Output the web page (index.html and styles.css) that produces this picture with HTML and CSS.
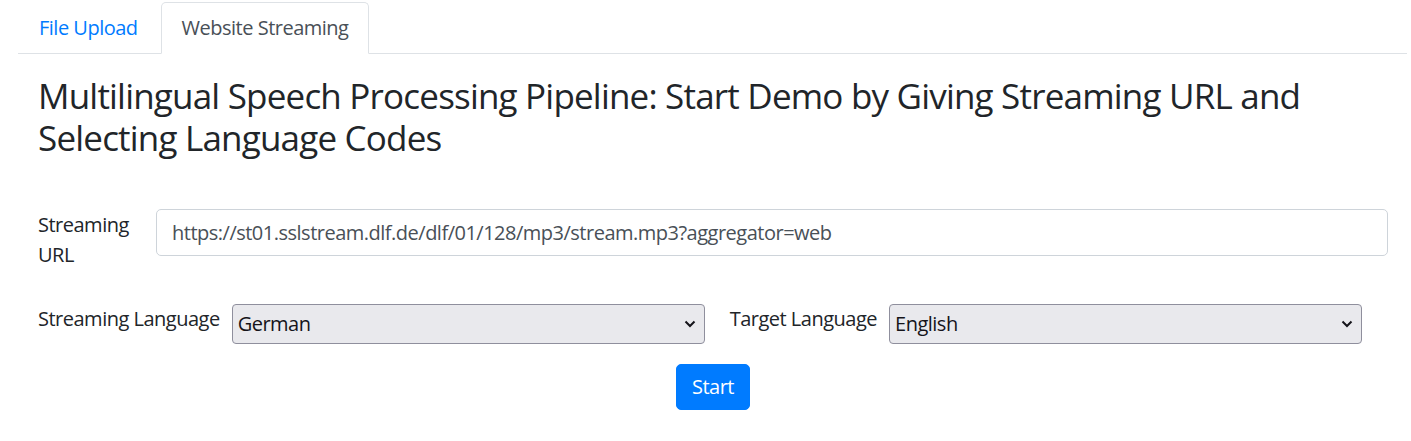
FILE: index.html
```html
<!DOCTYPE html>
<html lang="en">
<head>
<meta charset="utf-8">
<title>Multilingual Speech Processing Pipeline</title>
<link rel="stylesheet" href="styles.css">
</head>
<body>
<div class="page">
  <ul class="nav-tabs">
    <li class="nav-item"><a class="nav-link" href="#">File Upload</a></li>
    <li class="nav-item"><a class="nav-link active" href="#">Website Streaming</a></li>
  </ul>
  <div class="tab-content">
    <h3 class="title">Multilingual Speech Processing Pipeline: Start Demo by Giving Streaming URL and Selecting Language Codes</h3>
    <form class="stream-form">
      <div class="row-url">
        <label class="url-label" for="url">Streaming URL</label>
        <input class="form-control" id="url" type="text" value="https://st01.sslstream.dlf.de/dlf/01/128/mp3/stream.mp3?aggregator=web">
      </div>
      <div class="row-lang">
        <label class="lang-label" for="src">Streaming Language</label>
        <div class="select-wrap">
          <select id="src" class="lang-select"><option>German</option></select>
          <svg class="chevron" width="12" height="8" viewBox="0 0 12 8"><path d="M1.5 1.5 L6 6 L10.5 1.5" fill="none" stroke="#15141a" stroke-width="2"/></svg>
        </div>
        <label class="lang-label second" for="tgt">Target Language</label>
        <div class="select-wrap">
          <select id="tgt" class="lang-select"><option>English</option></select>
          <svg class="chevron" width="12" height="8" viewBox="0 0 12 8"><path d="M1.5 1.5 L6 6 L10.5 1.5" fill="none" stroke="#15141a" stroke-width="2"/></svg>
        </div>
      </div>
      <div class="row-btn">
        <button type="button" class="btn-primary">Start</button>
      </div>
    </form>
  </div>
</div>
</body>
</html>
```

FILE: styles.css
```css
* { box-sizing: border-box; }
html, body { margin: 0; padding: 0; background: #fff; }
body {
  font-family: "Open Sans", "Noto Sans", "DejaVu Sans", sans-serif;
  font-size: 20px;
  line-height: 1.5;
  color: #212529;
  letter-spacing: -0.025em;
}
.page {
  padding: 2px 4px 0 18px;
}
.nav-tabs {
  display: flex;
  list-style: none;
  margin: 0;
  padding: 0;
  border-bottom: 1px solid #dee2e6;
}
.nav-item { margin-bottom: -1px; }
.nav-link {
  display: block;
  padding: 10px 20px;
  border: 1px solid transparent;
  border-top-left-radius: 5px;
  border-top-right-radius: 5px;
  color: #007bff;
  text-decoration: none;
  margin-right: 2px;
}
.nav-link.active {
  color: #495057;
  background: #fff;
  border-color: #dee2e6 #dee2e6 #fff;
}
.tab-content {
  padding: 21px 19px 0 20px;
}
.title {
  margin: 0;
  font-size: 35px;
  font-weight: 400;
  line-height: 1.2;
  letter-spacing: -0.8px;
  color: #212529;
}
.stream-form { margin-top: 50px; }
.row-url {
  display: flex;
  align-items: flex-start;
}
.url-label {
  flex: 0 0 100px;
  margin-right: 18px;
  margin-top: 1px;
}
.form-control {
  flex: 1;
  height: 47px;
  padding: 7px 15px;
  font: inherit;
  letter-spacing: inherit;
  color: #495057;
  border: 1px solid #ced4da;
  border-radius: 5px;
  background: #fff;
}
.row-lang {
  display: flex;
  align-items: flex-start;
  margin-top: 34px;
}
.lang-label {
  margin-right: 12px;
  margin-top: 0;
}
.lang-label.second { margin-left: 25px; }
.select-wrap {
  position: relative;
  width: 473px;
  height: 40px;
}
.lang-select {
  appearance: none;
  -webkit-appearance: none;
  width: 100%;
  height: 100%;
  padding: 0 30px 0 5px;
  font: inherit;
  letter-spacing: inherit;
  color: #15141a;
  background: #e9e9ed;
  border: 1px solid #8f8f9d;
  border-radius: 4px;
}
.chevron {
  position: absolute;
  right: 9px;
  top: 16px;
  pointer-events: none;
}
.row-btn {
  display: flex;
  justify-content: center;
  margin-top: 20px;
}
.btn-primary {
  font: inherit;
  letter-spacing: inherit;
  color: #fff;
  background: #007bff;
  border: 1px solid #007bff;
  border-radius: 5px;
  padding: 7px 15px;
  line-height: 1.5;
}
```
